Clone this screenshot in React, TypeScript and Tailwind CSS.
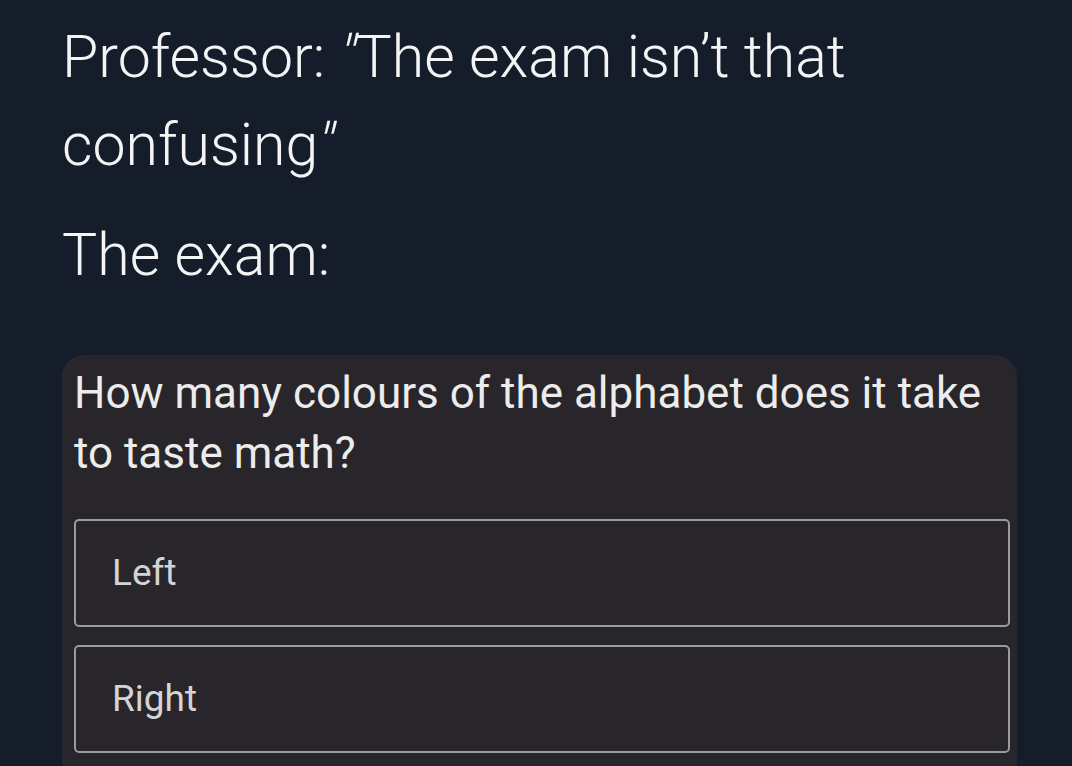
export default function App() {
    const options = ["Left", "Right"];

    return (
        <div className="h-[766px] w-full overflow-hidden bg-[#151d2b] pl-[62px] pr-[55px] font-['Roboto',sans-serif]">
            <p className="pt-[13px] text-[59px] font-light leading-[88px] text-[#f4f4f4]">
                Professor: <span className="inline-block -skew-x-12">&quot;</span>The exam isn&rsquo;t that
                <br/>
                confusing<span className="inline-block -skew-x-12">&quot;</span>
            </p>
            <p className="mt-[22px] text-[59px] font-light leading-[88px] text-[#f4f4f4]">The exam:</p>
            <div className="mt-[56px] rounded-[22px] bg-[#28262a] pl-[12px] pr-[7px] pt-[8px] pb-[30px]">
                <p className="text-[44px] leading-[60px] text-[#ececec]">
                    How many colours of the alphabet does it take to taste math?
                </p>
                <div className="mt-[36px] flex flex-col gap-[18px]">
                    {options.map(option => (
                        <div
                            key={option}
                            className="flex h-[108px] items-center rounded-[5px] border-2 border-[#9b9b9e] pl-[36px] text-[37px] text-[#d4d4d6]"
                        >
                            {option}
                        </div>
                    ))}
                </div>
            </div>
        </div>
    );
}
